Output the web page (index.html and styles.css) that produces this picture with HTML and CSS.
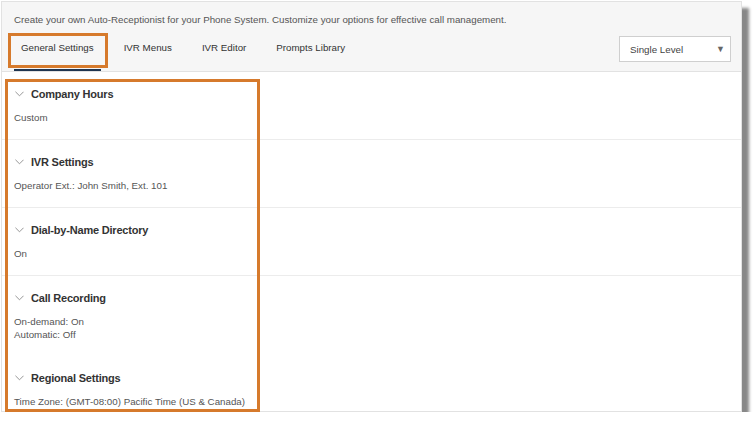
FILE: index.html
```html
<!DOCTYPE html>
<html>
<head>
  <title>Auto-Receptionist</title>
  <link rel="stylesheet" href="styles.css">
</head>
<body>

<div class="frame">
  <div class="header">
    <p class="intro">Create your own Auto-Receptionist for your Phone System. Customize your options for effective call management.</p>
    <div class="tabbar">
      <div class="tabs">
        <div class="tab active">General Settings</div>
        <div class="tab">IVR Menus</div>
        <div class="tab">IVR Editor</div>
        <div class="tab">Prompts Library</div>
      </div>
      <div class="select">Single Level<span class="arrow">&#9660;</span></div>
    </div>
  </div>

  <div class="section">
    <h3><svg class="chev" viewBox="0 0 10 6"><path d="M0.5 0.5 L5 5 L9.5 0.5"/></svg>Company Hours</h3>
    <p>Custom</p>
  </div>
  <div class="section">
    <h3><svg class="chev" viewBox="0 0 10 6"><path d="M0.5 0.5 L5 5 L9.5 0.5"/></svg>IVR Settings</h3>
    <p>Operator Ext.: John Smith, Ext. 101</p>
  </div>
  <div class="section">
    <h3><svg class="chev" viewBox="0 0 10 6"><path d="M0.5 0.5 L5 5 L9.5 0.5"/></svg>Dial-by-Name Directory</h3>
    <p>On</p>
  </div>
  <div class="section plain">
    <h3><svg class="chev" viewBox="0 0 10 6"><path d="M0.5 0.5 L5 5 L9.5 0.5"/></svg>Call Recording</h3>
    <p>On-demand: On<br>Automatic: Off</p>
  </div>
  <div class="section plain">
    <h3><svg class="chev" viewBox="0 0 10 6"><path d="M0.5 0.5 L5 5 L9.5 0.5"/></svg>Regional Settings</h3>
    <p>Time Zone: (GMT-08:00) Pacific Time (US &amp; Canada)</p>
  </div>

  <!-- callout boxes drawn over the screenshot -->
  <div class="callout tab-callout"></div>
  <div class="callout list-callout"></div>
</div>

</body>
</html>
```

FILE: styles.css
```css
body { margin: 0; background: #fff; font-family: "Liberation Sans", Arial, sans-serif; }

.frame { position: relative; margin: 1px 0 0 1px; width: 741px; height: 411px; box-sizing: border-box; border: 1px solid #e2e2e2; background: #fff; box-shadow: 7px 7px 3px #888; }

.header { background: #f6f6f6; border-bottom: 1px solid #e2e2e2; height: 69px; }
.intro { margin: 0; padding: 12px 0 0 12px; font-size: 9.75px; line-height: 12px; color: #555; }

.tabbar { display: flex; justify-content: space-between; align-items: flex-start; margin-top: 4px; padding: 0 10px 0 12px; }
.tabs { display: flex; gap: 16px; }
.tab { padding: 12px 7px 15px; font-size: 9.75px; line-height: 12px; color: #333; border-bottom: 2px solid transparent; }
.tab.active { border-bottom-color: #1f3550; }

.select { display: flex; justify-content: space-between; align-items: center; margin-top: 6px; width: 112px; height: 26px; box-sizing: border-box; padding: 0 5px 0 10px; background: #fff; border: 1px solid #cfcfcf; font-size: 9.75px; color: #444; }
.arrow { font-size: 9px; color: #666; }

.section { padding: 15px 0 15px 12px; border-bottom: 1px solid #ececec; }
.section.plain { border-bottom: none; }
.section h3 { display: flex; align-items: center; margin: 0; font-size: 11px; line-height: 14px; font-weight: bold; letter-spacing: -0.2px; color: #333; }
.chev { width: 9px; height: 6px; margin: 0 7px 0 1px; fill: none; stroke: #8a8a8a; stroke-width: 1; }
.section p { margin: 10px 0 0; font-size: 9.75px; line-height: 13px; color: #555; }

.callout { position: absolute; border: 3px solid #d67a2c; box-sizing: border-box; }
.tab-callout { left: 6px; top: 31px; width: 100px; height: 35px; }
.list-callout { left: 3px; top: 77px; width: 255px; height: 333px; }
```
